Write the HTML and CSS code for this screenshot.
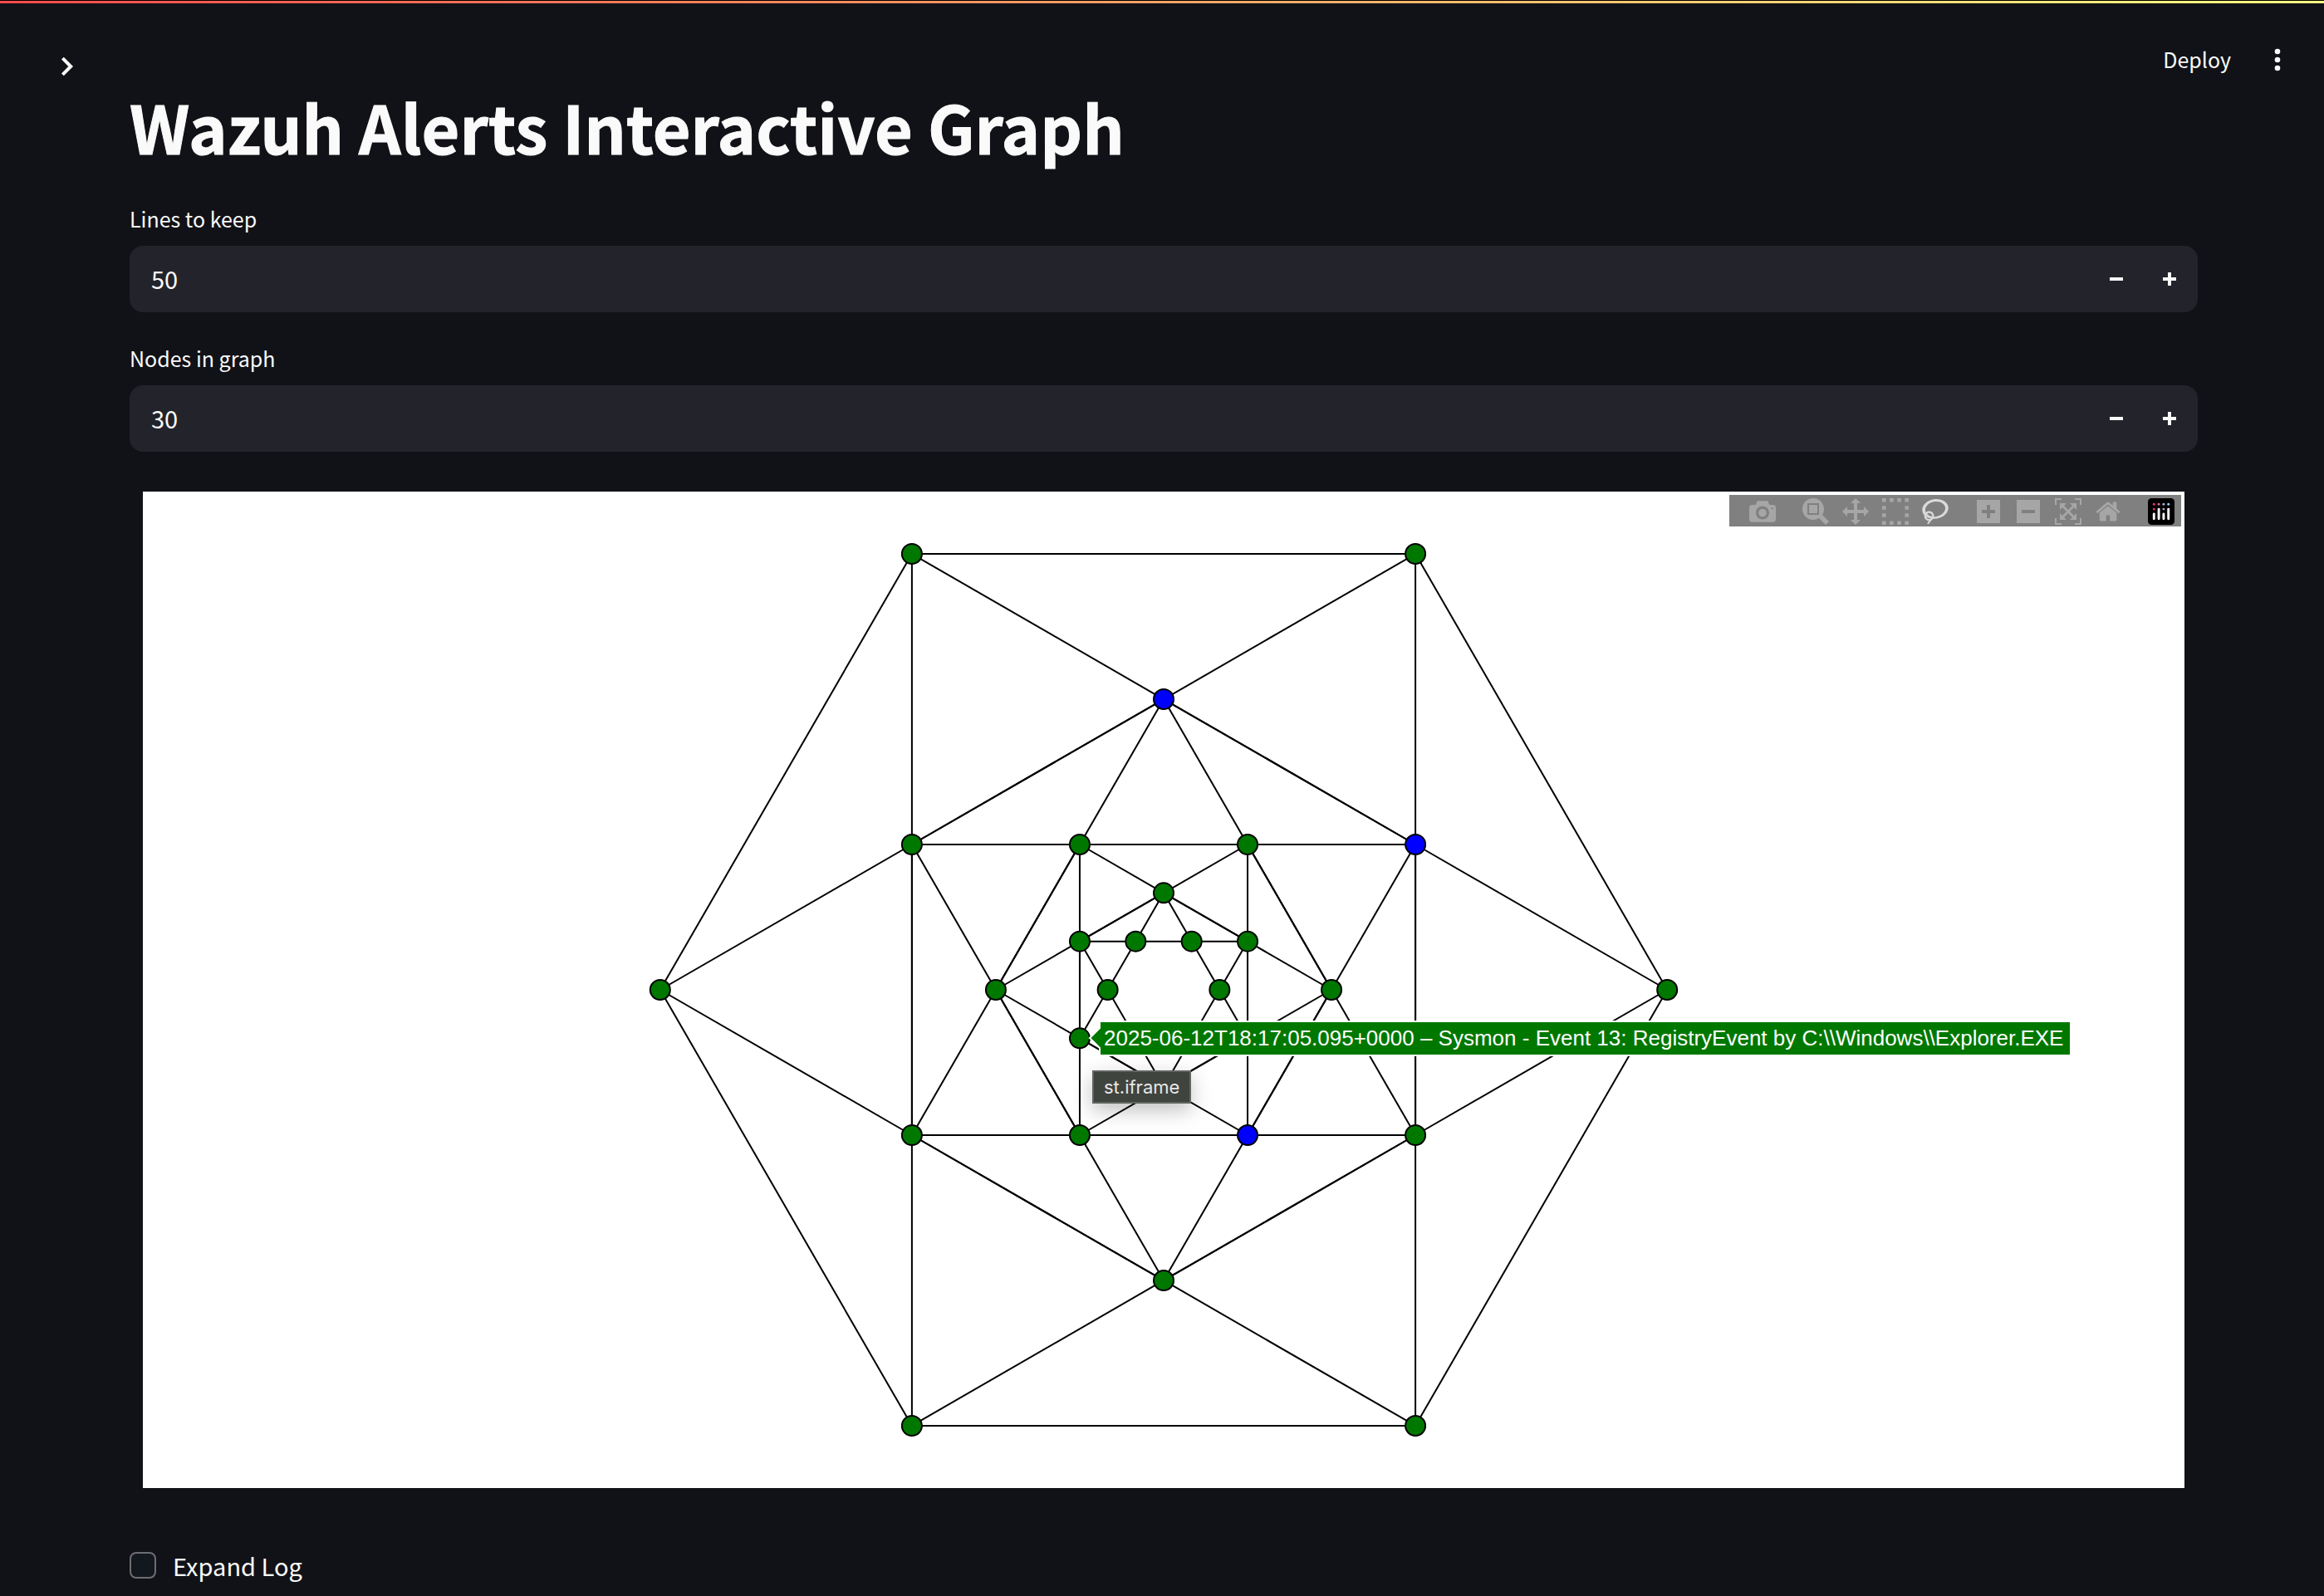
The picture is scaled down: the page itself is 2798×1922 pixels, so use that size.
FILE: index.html
```html
<!DOCTYPE html>
<html lang="en">
<head>
<meta charset="utf-8">
<meta name="viewport" content="width=device-width, initial-scale=1">
<title>Wazuh Alerts Interactive Graph</title>
<link rel="stylesheet" href="styles.css">
</head>
<body>
<div class="decoration"></div>
<header class="header">
  <button class="icon-button expand" type="button" aria-label="Open sidebar">
    <svg viewBox="0 0 32 32"><polyline points="11.4,6.2 21.2,16 11.4,25.8" fill="none" stroke="currentColor" stroke-width="4"/></svg>
  </button>
  <div class="toolbar">
    <button class="deploy" type="button">Deploy</button>
    <button class="icon-button menu" type="button" aria-label="Main menu">
      <svg viewBox="0 0 48 48" fill="currentColor"><circle cx="24" cy="14" r="3.3"/><circle cx="24" cy="24" r="3.3"/><circle cx="24" cy="34" r="3.3"/></svg>
    </button>
  </div>
</header>

<main class="main">
  <h1 class="title">Wazuh Alerts Interactive Graph</h1>

  <div class="field">
    <label class="field-label" for="lines">Lines to keep</label>
    <div class="number">
      <input class="number-input" id="lines" type="text" inputmode="numeric" value="50">
      <button class="step" type="button" aria-label="Decrease lines"><svg viewBox="0 0 16 16"><path d="M0 6h16v4H0z"/></svg></button>
      <button class="step" type="button" aria-label="Increase lines"><svg viewBox="0 0 16 16"><path d="M0 6h6V0h4v6h6v4h-6v6H6v-6H0z"/></svg></button>
    </div>
  </div>

  <div class="field">
    <label class="field-label" for="nodes">Nodes in graph</label>
    <div class="number">
      <input class="number-input" id="nodes" type="text" inputmode="numeric" value="30">
      <button class="step" type="button" aria-label="Decrease nodes"><svg viewBox="0 0 16 16"><path d="M0 6h16v4H0z"/></svg></button>
      <button class="step" type="button" aria-label="Increase nodes"><svg viewBox="0 0 16 16"><path d="M0 6h6V0h4v6h6v4h-6v6H6v-6H0z"/></svg></button>
    </div>
  </div>

  <div class="frame">
    <div class="chart">
      <svg class="plot" viewBox="-1229 -600 2458 1200" role="img" aria-label="Alert graph">
        <g class="edges" id="edges"></g>
        <g class="nodes" id="points"></g>
        <g class="hover">
          <path d="M-89 58L-77 46V38H1092V79H-77V70Z"/>
          <text x="-72" y="67">2025-06-12T18:17:05.095+0000 – Sysmon - Event 13: RegistryEvent by C:\\Windows\\Explorer.EXE</text>
        </g>
      </svg>

      <div class="modebar">
        <div class="modebar-group">
          <button class="tool" type="button" aria-label="Download plot as a png"><svg viewBox="0 0 1000 1000"><path transform="matrix(1 0 0 -1 0 850)" d="m500 450c-83 0-150-67-150-150 0-83 67-150 150-150 83 0 150 67 150 150 0 83-67 150-150 150z m400 150h-120c-16 0-34 13-39 29l-31 93c-6 15-23 28-40 28h-340c-16 0-34-13-39-28l-31-94c-6-15-23-28-40-28h-120c-55 0-100-45-100-100v-450c0-55 45-100 100-100h800c55 0 100 45 100 100v450c0 55-45 100-100 100z m-400-550c-138 0-250 112-250 250 0 138 112 250 250 250 138 0 250-112 250-250 0-138-112-250-250-250z m365 380c-19 0-35 16-35 35 0 19 16 35 35 35 19 0 35-16 35-35 0-19-16-35-35-35z"/></svg></button>
        </div>
        <div class="modebar-group">
          <button class="tool" type="button" aria-label="Zoom"><svg viewBox="0 0 1000 1000"><path transform="matrix(1 0 0 -1 0 850)" d="m1000-25l-250 251c40 63 63 138 63 218 0 224-182 406-407 406-224 0-406-182-406-406s183-406 407-406c80 0 155 22 218 62l250-250 125 125z m-812 250l0 438 437 0 0-438-437 0z m62 375l313 0 0-312-313 0 0 312z"/></svg></button>
          <button class="tool" type="button" aria-label="Pan"><svg viewBox="0 0 1000 1000"><path transform="matrix(1 0 0 -1 0 850)" d="m1000 350l-187 188 0-125-250 0 0 250 125 0-188 187-187-187 125 0 0-250-250 0 0 125-188-188 186-187 0 125 252 0 0-250-125 0 187-188 188 188-125 0 0 250 250 0 0-126 187 188z"/></svg></button>
          <button class="tool" type="button" aria-label="Box select"><svg viewBox="0 0 14 14"><path d="M0 0h2v2H0zM4 0h2v2H4zM8 0h2v2H8zM12 0h2v2h-2zM0 4h2v2H0zM12 4h2v2h-2zM0 8h2v2H0zM12 8h2v2h-2zM0 12h2v2H0zM4 12h2v2H4zM8 12h2v2H8zM12 12h2v2h-2z"/></svg></button>
          <button class="tool active" type="button" aria-label="Lasso select"><svg viewBox="0 0 1031 1000"><path transform="matrix(1 0 0 -1 0 850)" d="m1018 538c-36 207-290 336-568 286-277-48-473-256-436-463 10-57 36-108 76-151-13-66 11-137 68-183 34-28 75-41 114-42l-55-70 0 0c-2-1-3-2-4-3-10-14-8-34 5-45 14-11 34-8 45 4 1 1 2 3 2 5l0 0 113 140c16 11 31 24 45 40 4 3 6 7 8 11 48-3 100 0 151 9 278 48 473 255 436 462z m-624-379c-80 14-149 48-197 96 42 42 109 47 156 9 33-26 47-66 41-105z m-187-74c-19 16-33 37-39 60 50-32 109-55 174-68-42-25-95-24-135 8z m360 75c-34-7-69-9-102-8 8 62-16 128-68 170-73 59-175 54-244-5-9 20-16 40-20 61-28 159 121 317 333 354s407-60 434-217c28-159-121-318-333-355z"/></svg></button>
        </div>
        <div class="modebar-group">
          <button class="tool" type="button" aria-label="Zoom in"><svg viewBox="0 0 875 1000"><path transform="matrix(1 0 0 -1 0 850)" d="m1 787l0-875 875 0 0 875-875 0z m687-500l-187 0 0-187-125 0 0 187-188 0 0 125 188 0 0 187 125 0 0-187 187 0 0-125z"/></svg></button>
          <button class="tool" type="button" aria-label="Zoom out"><svg viewBox="0 0 875 1000"><path transform="matrix(1 0 0 -1 0 850)" d="m0 788l0-876 875 0 0 876-875 0z m688-500l-500 0 0 125 500 0 0-125z"/></svg></button>
          <button class="tool" type="button" aria-label="Autoscale"><svg viewBox="0 0 1000 1000"><path transform="matrix(1 0 0 -1 0 850)" d="m250 850l-187 0-63 0 0-62 0-188 63 0 0 188 187 0 0 62z m688 0l-188 0 0-62 188 0 0-188 62 0 0 188 0 62-62 0z m-875-938l0 188-63 0 0-188 0-62 63 0 187 0 0 62-187 0z m875 188l0-188-188 0 0-62 188 0 62 0 0 62 0 188-62 0z m-125 188l-1 0-93-94-156 156 156 156 92-93 2 0 0 250-250 0 0-2 93-92-156-156-156 156 94 92 0 2-250 0 0-250 0 0 93 93 157-156-157-156-93 94 0 0 0-250 250 0 0 0-94 93 156 157 156-157-93-93 0 0 250 0 0 250z"/></svg></button>
          <button class="tool" type="button" aria-label="Reset axes"><svg viewBox="0 0 928.6 1000"><path transform="matrix(1 0 0 -1 0 850)" d="m786 296v-267q0-15-11-26t-25-10h-214v214h-143v-214h-214q-15 0-25 10t-11 26v267q0 1 0 2t0 2l321 264 321-264q1-1 1-4z m124 39l-34-41q-5-5-12-6h-2q-7 0-12 3l-386 322-386-322q-7-4-13-4-7 2-12 7l-35 41q-4 5-3 13t6 12l401 334q18 15 42 15t43-15l136-114v109q0 8 5 13t13 5h107q8 0 13-5t5-13v-227l122-102q5-5 6-12t-4-13z"/></svg></button>
        </div>
        <div class="modebar-group">
          <a class="tool" href="#" aria-label="Produced with Plotly.js">
            <svg viewBox="0 0 132 132">
              <rect width="132" height="132" rx="18" fill="#000"/>
              <circle cx="30" cy="30" r="6" fill="#ff2c6d"/><circle cx="30" cy="54" r="6" fill="#ff2c6d"/>
              <circle cx="54" cy="30" r="6" fill="#cf6d8c"/>
              <circle cx="78" cy="30" r="6" fill="#b4a9dc"/><circle cx="78" cy="54" r="6" fill="#b4a9dc"/>
              <circle cx="102" cy="30" r="6" fill="#8edaf3"/>
              <path d="M30 78v24M54 54v48M78 78v24M102 54v48" stroke="#fff" stroke-width="12" stroke-linecap="round"/>
            </svg>
          </a>
        </div>
      </div>

      <div class="tooltip" role="tooltip">st.iframe</div>
    </div>
  </div>

  <label class="check"><input class="check-box" type="checkbox">Expand Log</label>
</main>
<script src="graph.js"></script>
</body>
</html>
```
FILE: styles.css
```css
* {
  box-sizing: border-box;
}

body {
  margin: 0;
  background: #111217;
  color: #fafafa;
  font-family: "Noto Sans CJK SC", "Noto Sans", sans-serif;
  font-size: 29px;
}

button {
  margin: 0;
  padding: 0;
  border: 0;
  background: none;
  color: inherit;
  font: inherit;
}

svg {
  display: block;
}

.decoration {
  height: 4px;
  border-top: 1px solid #000;
  background: linear-gradient(90deg, #ff4b4b, #fffd80);
}

.header {
  display: flex;
  justify-content: space-between;
  align-items: flex-end;
  height: 92px;
  padding: 0 32px 0 64px;
}

.expand {
  width: 32px;
  height: 32px;
}

.toolbar {
  display: flex;
  align-items: flex-start;
  gap: 32px;
}

.deploy {
  font-size: 25px;
  line-height: 46px;
}

.menu {
  width: 48px;
  height: 48px;
}

.main {
  display: flex;
  flex-direction: column;
  gap: 32px;
  padding: 0 152px 12px 156px;
}

.title {
  margin: 0;
  font-size: 79px;
  font-weight: 700;
  line-height: 112px;
  -webkit-text-stroke: 1px #fafafa;
}

.field {
  display: flex;
  flex-direction: column;
  gap: 10px;
}

.field-label {
  font-size: 25px;
  line-height: 46px;
}

.number {
  display: flex;
  height: 80px;
  border: 2px solid #232429;
  border-radius: 16px;
  background: #23232b;
  overflow: hidden;
}

.number-input {
  flex: 1;
  min-width: 0;
  padding: 0 24px 2px;
  border: 0;
  outline: 0;
  background: none;
  color: inherit;
  font: inherit;
}

.step {
  display: grid;
  place-items: center;
  width: 64px;
}

.step svg {
  width: 16px;
  height: 16px;
  fill: currentColor;
}

.frame {
  padding: 16px 16px 38px;
}

.chart {
  position: relative;
  background: #fff;
}

.plot {
  width: 100%;
  height: 1200px;
}

.edges {
  fill: none;
  stroke: #000;
  stroke-width: 2;
}

.nodes {
  fill: #007800;
  stroke: #000;
  stroke-width: 2;
}

.nodes .blue {
  fill: #00f;
}

.hover path {
  fill: #007800;
  stroke: #fff;
  stroke-width: 2;
}

.hover text {
  fill: #fff;
  font-family: "Liberation Sans", Arial, sans-serif;
  font-size: 26px;
}

.modebar {
  position: absolute;
  top: 4px;
  right: 4px;
  display: flex;
  gap: 16px;
  height: 38px;
  padding-left: 16px;
  background: #808080;
}

.modebar-group {
  display: flex;
}

.tool {
  padding: 4px 8px 2px;
  color: #a6a6a6;
}

.tool.active {
  color: #d9d9d9;
}

.tool svg {
  width: 32px;
  height: 32px;
  fill: currentColor;
}

.tooltip {
  position: absolute;
  top: 697px;
  left: calc(50% - 86px);
  padding: 0 12px;
  border: 2px solid #616561;
  background: #40443f;
  box-shadow: 0 8px 24px rgba(0, 0, 0, 0.25);
  color: #e6e7e6;
  font-family: Inter, sans-serif;
  font-size: 22px;
  line-height: 36px;
}

.check {
  display: flex;
  align-items: center;
  gap: 20px;
  line-height: 46px;
}

.check-box {
  appearance: none;
  width: 32px;
  height: 32px;
  margin: 0;
  border: 2px solid #6d6e71;
  border-radius: 8px;
  background: #13171e;
}
```
FILE: graph.js
```js
// Five nested hexagonal rings; each ring is joined to the next one inside it.
const SVG = "http://www.w3.org/2000/svg";
const OUTER = 606.2;
const RINGS = 5;
const BLUE = ["1-4", "1-5", "2-1"];

function vertex(ring, k) {
  const radius = OUTER / Math.pow(Math.sqrt(3), ring);
  const angle = ((k * 60 + (ring % 2) * 30) * Math.PI) / 180;
  return [radius * Math.cos(angle), radius * Math.sin(angle)];
}

function add(parent, tag, attrs) {
  const el = document.createElementNS(SVG, tag);
  for (const name in attrs) el.setAttribute(name, attrs[name]);
  parent.appendChild(el);
}

function edge(a, b) {
  add(document.getElementById("edges"), "line", { x1: a[0], y1: a[1], x2: b[0], y2: b[1] });
}

for (let ring = 0; ring < RINGS; ring++) {
  for (let k = 0; k < 6; k++) {
    const here = vertex(ring, k);
    const next = vertex(ring, k + 1);
    edge(here, next);
    // the middle rings carry an edge in each direction
    if (ring > 0 && ring < RINGS - 1) edge(next, here);
    if (ring < RINGS - 1) {
      const shift = ring % 2 ? 1 : -1;
      edge(here, vertex(ring + 1, k));
      edge(here, vertex(ring + 1, k + shift));
    }
    const attrs = { cx: here[0], cy: here[1], r: 12 };
    if (BLUE.includes(ring + "-" + k)) attrs.class = "blue";
    add(document.getElementById("points"), "circle", attrs);
  }
}
```
